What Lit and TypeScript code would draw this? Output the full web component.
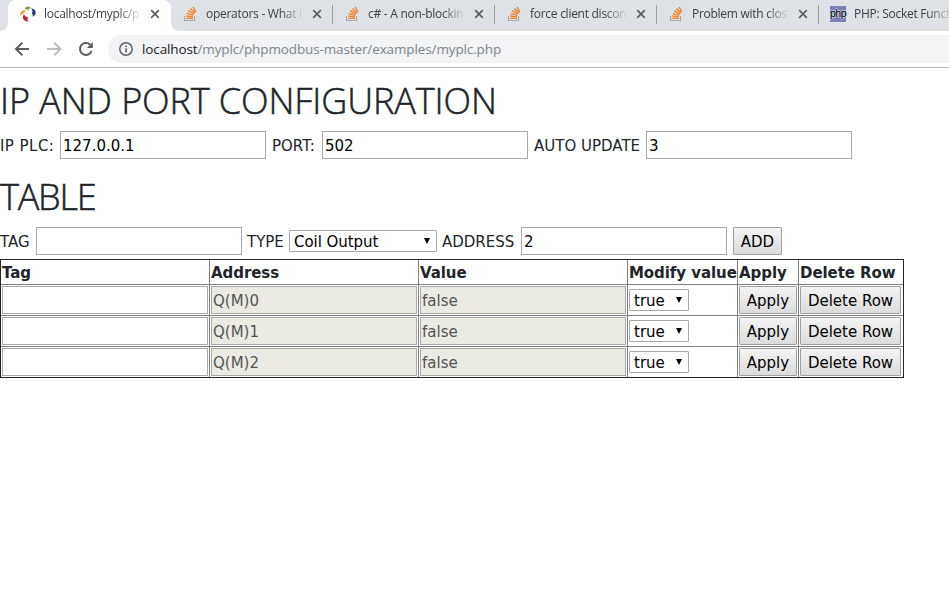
import { LitElement, html, css } from "lit";
import { customElement } from "lit/decorators.js";

const stackIcon = html`<svg class="fav" viewBox="0 0 16 16" width="16" height="16">
  <path d="M2.5 10V14.5H12.5V10" fill="none" stroke="#a7a9ad" stroke-width="1.2" />
  <g stroke="#f48024" stroke-width="1.4" fill="none">
    <path d="M4.2 12.4H11M4.2 10L11 10.9M4.8 7.4L11.3 9.3M6.2 4.7L12 8.1M8.5 2.5L12.9 7.1M11.2 1L13.9 6.2" />
  </g>
</svg>`;
const swirlIcon = html`<svg class="fav" viewBox="0 0 16 16" width="16" height="16">
  <path d="M4.6 3C6 .2 9.6 -.3 11 2.4C9.2 2.2 8.6 3.2 7.8 4.8C7.2 3.4 6 2.8 4.6 3Z" fill="#76a84a" />
  <path d="M11 2.3C13.6 2.6 15.6 4 15.7 6.4C15.6 8.4 14.4 9.8 12.4 10.8C13.2 9.2 12.8 8.2 11.8 7.4C13 6 12.6 3.9 11 2.3Z" fill="#2a3580" />
  <path d="M.4 10.2C-.8 6.4 2 3.2 6.4 4.2C4.6 5 4.2 6 4.4 7.6C2.6 7.4 1.2 8.4 .4 10.2Z" fill="#f0a04a" />
  <path d="M4 8.2C1.4 11.4 3.6 15.8 8.8 15.4C7 14.4 7 13.2 8.4 11.4C6.2 11.4 4.8 10.2 4 8.2Z" fill="#c32227" />
</svg>`;
const phpIcon = html`<span class="fav php">php</span>`;
const cross = html`<svg class="cross" viewBox="0 0 10 10" width="10" height="10"><path d="M1.2 1.2L8.8 8.8M8.8 1.2L1.2 8.8" stroke="#5a5e63" stroke-width="1.7" /></svg>`;

const tabs = [
  { icon: stackIcon, title: "operators - What i", cls: "t1" },
  { icon: stackIcon, title: "c# - A non-blockin", cls: "t2" },
  { icon: stackIcon, title: "force client discon", cls: "t3" },
  { icon: stackIcon, title: "Problem with closi", cls: "t4" },
  { icon: phpIcon, title: "PHP: Socket Funct", cls: "t5" },
];

@customElement("browser-bar")
export class BrowserBar extends LitElement {
  static styles = css`
    :host { display: block; font-family: "Open Sans", "Noto Sans", sans-serif; }
    .tabs { height: 31px; background: #dee1e6; display: flex; overflow: hidden; }
    .lead { width: 8px; background: #fff; flex: none; }
    .lead i { display: block; height: 31px; background: #dee1e6; border-radius: 0 0 8px 0; }
    .tab { flex: none; width: 162px; box-sizing: border-box; height: 31px; padding: 0 0 3px 11px; display: flex; align-items: center; position: relative; }
    .tab.on { width: 163px; background: #fff; padding-left: 12px; border-radius: 8px 8px 0 0; }
    .sep::after { content: ""; position: absolute; right: 0; top: 5px; width: 1px; height: 19px; background: #9b9fa5; }
    .under { background: linear-gradient(90deg, #fff 20px, #dee1e6 20px); }
    .under .tab { background: #dee1e6; border-bottom-left-radius: 8px; }
    .fav { flex: none; margin-right: 8px; display: block; }
    .php { width: 16px; height: 16px; background: #7a7eba; color: #000; font: 10.5px/14px "Liberation Sans", sans-serif; letter-spacing: -0.5px; text-align: center; text-shadow: 1px 0 0 #c9cbe6, -1px 0 0 #c9cbe6, 0 1px 0 #c9cbe6, 0 -1px 0 #c9cbe6; }
    .label { flex: none; width: 96px; height: 18px; white-space: nowrap; font-size: 12px; line-height: 18px; letter-spacing: -0.27px; color: #3c4043; margin-right: 10px; -webkit-mask-image: linear-gradient(90deg, #000 74px, transparent 98px); mask-image: linear-gradient(90deg, #000 74px, transparent 98px); }
    .cross { flex: none; }
    .bar { height: 36px; display: flex; align-items: center; border-bottom: 1px solid #b4b6b8; background: #fff; }
    .nav { flex: none; display: block; }
    .omni { flex: 1; margin-left: 10px; height: 28px; background: #f1f3f4; border-radius: 14px 0 0 14px; display: flex; align-items: center; padding-left: 10px; }
    .url { font-size: 13.5px; line-height: 20px; letter-spacing: -0.12px; color: #80868b; margin-left: 8px; white-space: pre; }
    .host { color: #202124; }
  `;
  render() {
    return html`
      <div class="tabs">
        <div class="lead"><i></i></div>
        <div class="tab on">${swirlIcon}<span class="label">localhost/myplc/ph</span>${cross}</div>
        ${tabs.map((t, i) => html`<div class=${i === 0 ? "under" : "rest"}>
          <div class="tab ${t.cls} ${i > 0 && i < 4 || i === 0 ? "sep" : ""}">${t.icon}<span class="label">${t.title}</span>${i < 4 ? cross : ""}</div></div>`)}
      </div>
      <div class="bar">
        <svg class="nav" width="98" height="36" viewBox="0 0 98 36" fill="none" stroke-width="2">
          <path d="M29 18H16.5M22.3 11.8L16 18L22.3 24.2" stroke="#5a5e63" />
          <path d="M47 18H60M54.2 11.8L60.5 18L54.2 24.2" stroke="#bcbec1" />
          <path d="M91.6 20A6 6 0 1 1 90.2 13.7" stroke="#5a5e63" />
          <path d="M92.8 11V17H86.8Z" fill="#5a5e63" />
        </svg>
        <div class="omni">
          <svg width="16" height="16" viewBox="0 0 16 16"><circle cx="8" cy="8" r="6.2" fill="none" stroke="#5f6368" stroke-width="1.5" /><path d="M8 7.2V11.4M8 4.6V6.1" stroke="#5f6368" stroke-width="1.6" /></svg>
          <span class="url"><span class="host">localhost</span>/myplc/phpmodbus-master/examples/myplc.php</span>
        </div>
      </div>`;
  }
}

@customElement("app-root")
export class AppRoot extends LitElement {
  static styles = css`
    :host { display: block; height: 590px; overflow: hidden; background: #fff; color: #212529; font: 15px/22px "DejaVu Sans", sans-serif; }
    h1 { margin: 0; font: 300 36px/44px "Open Sans", "Noto Sans", sans-serif; white-space: nowrap; -webkit-text-stroke: 0.5px #212529; }
    .h-ip { margin-top: 11px; letter-spacing: -0.1px; }
    .h-table { margin-top: 16px; letter-spacing: -1.2px; }
    .row { display: flex; align-items: center; height: 28px; margin-top: 8px; }
    .lbl { flex: none; white-space: nowrap; padding-top: 2px; }
    .ip { width: 60px; letter-spacing: 0.45px; }
    .port { width: 50px; }
    .auto { width: 112px; }
    .tag { width: 36px; }
    .kind { width: 42px; margin-left: 5px; }
    .addr { width: 79px; margin-left: 5px; }
    .gap { margin-left: 6px; }
    input { display: block; box-sizing: border-box; width: 206px; height: 28px; border: 1px solid #a9a9a9; border-radius: 0; padding: 3px 2px 1px; margin: 0; font: 15px "DejaVu Sans", sans-serif; color: #000; background: #fff; flex: none; outline: none; }
    input:disabled { background: #ebebe4; color: #545454; padding-left: 1px; }
    .select { box-sizing: border-box; height: 22px; border: 1px solid #a9a9a9; border-radius: 1px; background: #fff; color: #000; padding: 0 6px 0 4px; display: flex; align-items: center; justify-content: space-between; line-height: 20px; flex: none; }
    .select span { padding-top: 2px; }
    .type { width: 148px; }
    .type span { letter-spacing: -0.05px; }
    .bool { width: 60px; }
    button { display: block; box-sizing: border-box; height: 28px; margin: 0; padding: 2px 0 0; border: 1px solid #a0a0a0; border-radius: 1px; background: linear-gradient(#f3f3f3, #dcdcdc); font: 15px "DejaVu Sans", sans-serif; color: #000; white-space: nowrap; flex: none; }
    .b-add { width: 49px; margin-left: 6px; }
    .b-apply { width: 58px; }
    .b-del { width: 101px; }
    .grid { margin-top: 4px; width: 904px; box-sizing: border-box; border: 1px solid #212529; display: grid; grid-template-columns: 208px 208px 208px 109px 60px 104px; gap: 1px; background: #808080; }
    .c { background: #fff; padding: 1px; min-width: 0; height: 28px; display: flex; align-items: center; white-space: nowrap; }
    .c.th { height: 20px; padding-top: 3px; font-weight: 700; letter-spacing: -0.06px; }
  `;
  render() {
    const tri = html`<svg width="6" height="6" viewBox="0 0 6 6"><path d="M0 0H6L3 6Z" fill="#000" /></svg>`;
    const heads = ["Tag", "Address", "Value", "Modify value", "Apply", "Delete Row"];
    return html`
      <browser-bar></browser-bar>
      <h1 class="h-ip">IP AND PORT CONFIGURATION</h1>
      <div class="row">
        <span class="lbl ip">IP PLC:</span><input .value=${"127.0.0.1"} />
        <span class="lbl gap port">PORT:</span><input .value=${"502"} />
        <span class="lbl gap auto">AUTO UPDATE</span><input .value=${"3"} />
      </div>
      <h1 class="h-table">TABLE</h1>
      <div class="row">
        <span class="lbl tag">TAG</span><input />
        <span class="lbl kind">TYPE</span><div class="select type"><span>Coil Output</span>${tri}</div>
        <span class="lbl addr">ADDRESS</span><input .value=${"2"} />
        <button class="b-add">ADD</button>
      </div>
      <div class="grid">
        ${heads.map((h) => html`<div class="c th"><span>${h}</span></div>`)}
        ${[0, 1, 2].map((n) => html`
          <div class="c"><input /></div>
          <div class="c"><input disabled .value=${`Q(M)${n}`} /></div>
          <div class="c"><input disabled .value=${"false"} /></div>
          <div class="c"><div class="select bool"><span>true</span>${tri}</div></div>
          <div class="c"><button class="b-apply">Apply</button></div>
          <div class="c"><button class="b-del">Delete Row</button></div>`)}
      </div>`;
  }
}
